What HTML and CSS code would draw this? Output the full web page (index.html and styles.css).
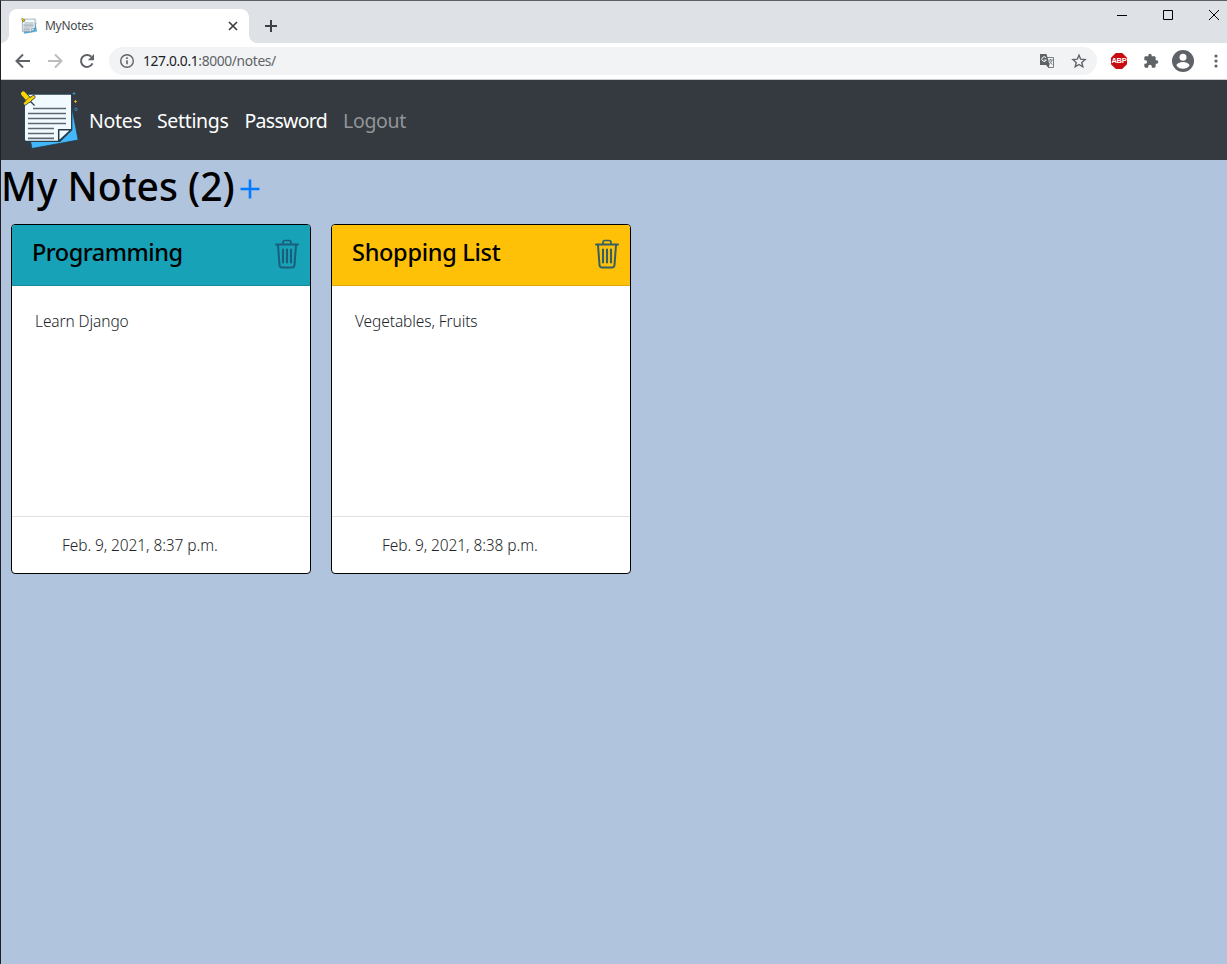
FILE: index.html
```html
<!DOCTYPE html>
<html lang="en">
<head>
<meta charset="utf-8">
<title>MyNotes</title>
<link rel="stylesheet" href="styles.css">
</head>
<body>
<svg class="defs" width="0" height="0">
  <symbol id="note" viewBox="0 0 60 60">
    <path d="M52.500 15.500l6.700 34.500-46.200 8.500-1.500-7z" fill="#42b8fb" stroke="#263e4c" stroke-width=".8"/>
    <path d="M7 4h45.700v35.700L41 51.300H7q-1.700 0-1.700-1.700V5.700Q5.300 4 7 4z" fill="#f0faff" stroke="#263e4c" stroke-width="1.300" stroke-linejoin="round"/>
    <path d="M39.700 51.300V39.700h12.500z" fill="#f0faff" stroke="#263e4c" stroke-width="1.500" stroke-linejoin="round"/>
    <path d="M14 18.500h33M9 23.500h38M9 28.500h38M9 33.500h38M9 38.500h26M9 43.500h26M9 48.300h26" stroke="#5e6870" stroke-width="1.700"/>
    <path d="M10.500 10.500l5 5" stroke="#263e4c" stroke-width="1.300"/>
    <path d="M4.300 3.700l5.500 6" stroke="#263e4c" stroke-width="6" stroke-linecap="round"/>
    <path d="M6 13.500l8.500-6.500" stroke="#263e4c" stroke-width="4" stroke-linecap="round"/>
    <path d="M4.300 3.700l5.500 6" stroke="#ffd500" stroke-width="4.600" stroke-linecap="round"/>
    <path d="M6 13.500l8.500-6.500" stroke="#ffd500" stroke-width="2.500" stroke-linecap="round"/>
    <path d="M6.500 10.500l5-4" stroke="#5e5a20" stroke-width=".7"/>
    <path d="M53.500 3.500h3M55 2v3" stroke="#348dbf"/>
    <path d="M55 11.500h3M56.500 10v3" stroke="#d7a92c"/>
    <circle cx="57" cy="19.300" r="1.300" fill="none" stroke="#348dbf" stroke-width=".9"/>
  </symbol>
  <symbol id="trash" viewBox="0 0 24 30">
    <g fill="none" stroke="currentColor" stroke-linecap="round" stroke-linejoin="round">
      <path d="M1 5.500h22" stroke-width="2"/>
      <path d="M8 5V3.500Q8 1.500 10 1.500h4q2 0 2 2V5" stroke-width="1.700"/>
      <path d="M3 6l1.500 20q.2 2.500 2.500 2.500h10q2.300 0 2.500-2.500L21 6" stroke-width="2"/>
      <path d="M8 10.500v13M12 10.500v13M16 10.500v13" stroke-width="2.100"/>
    </g>
  </symbol>
</svg>
<div class="window">
  <header class="tabstrip">
    <div class="tab">
      <svg class="favicon"><use href="#note"/></svg>
      <span class="tab-title">MyNotes</span>
      <svg class="tab-close" viewBox="0 0 10 10"><path d="M1 1l8 8M9 1L1 9" stroke="#3c4043" stroke-width="1.700"/></svg>
    </div>
    <svg class="new-tab" viewBox="0 0 12 12"><path d="M6 0v12M0 6h12" stroke="#3c4043" stroke-width="2"/></svg>
    <div class="controls">
      <svg viewBox="0 0 12 12"><path d="M1 6.500h10" stroke="#000"/></svg>
      <svg viewBox="0 0 12 12"><path d="M1.500 1.500h9v9h-9z" fill="none" stroke="#000"/></svg>
      <svg viewBox="0 0 12 12"><path d="M1 1l10 10M11 1L1 11" stroke="#000"/></svg>
    </div>
  </header>
  <div class="toolbar">
    <svg class="tool" viewBox="0 0 16 16"><path d="M15 8H2M8 1.500L1.500 8 8 14.500" fill="none" stroke="#5f6368" stroke-width="2"/></svg>
    <svg class="tool" viewBox="0 0 16 16"><path d="M1 8h13M8 1.500L14.500 8 8 14.500" fill="none" stroke="#bbbdbf" stroke-width="2"/></svg>
    <svg class="tool" viewBox="0 0 16 16"><path d="M13.500 10.400A6 6 0 1 1 12.300 3.700" fill="none" stroke="#5f6368" stroke-width="2"/><path d="M15 1v6.200H8.800z" fill="#5f6368"/></svg>
    <div class="omnibox">
      <svg class="info" viewBox="0 0 16 16"><circle cx="8" cy="8" r="6.300" fill="none" stroke="#5f6368" stroke-width="1.400"/><path d="M8 7.200v4M8 4.300v1.700" stroke="#5f6368" stroke-width="1.600"/></svg>
      <span class="url"><b>127.0.0.1</b>:8000/notes/</span>
      <svg class="translate" viewBox="0 0 16 16"><path d="M7 4.500h7.500v10H9" fill="none" stroke="#7b7f83"/><path d="M1 1h6.500l3.200 11H1z" fill="#5f6368"/><path d="M7 12l2.500 3 1-3z" fill="#5f6368"/><path d="M7 4.700A2.300 2.300 0 1 0 7.300 7H5.200" fill="none" stroke="#fff"/><path d="M9.500 7H14M11.500 6v1M13 7q-.6 2.500-2.700 4M10.500 8q1 2 3 3.500" fill="none" stroke="#777b7f" stroke-width=".9"/></svg>
      <svg class="star" viewBox="0 0 16 16"><path d="M8 2.200l1.700 4 4.400.4-3.300 2.900 1 4.300L8 11.500l-3.800 2.300 1-4.300-3.300-2.900 4.400-.4z" fill="none" stroke="#5f6368" stroke-width="1.400"/></svg>
    </div>
    <div class="extensions">
      <div class="abp">ABP</div>
      <svg class="puzzle" viewBox="0 0 24 24"><path fill="#5f6368" d="M20.500 11H19V7c0-1.100-.9-2-2-2h-4V3.500a2.500 2.500 0 0 0-5 0V5H4c-1.100 0-2 .9-2 2v3.800h1.500a2.700 2.700 0 0 1 0 5.400H2V20c0 1.100.9 2 2 2h3.800v-1.500a2.700 2.700 0 0 1 5.400 0V22H17c1.100 0 2-.9 2-2v-4h1.500a2.500 2.500 0 0 0 0-5z"/></svg>
      <svg class="avatar" viewBox="0 0 22 22"><circle cx="11" cy="11" r="11" fill="#5f6368"/><circle cx="11" cy="7.300" r="3.500" fill="#fff"/><path d="M4.500 15.500c0-2.300 4.300-3.500 6.500-3.500s6.500 1.200 6.500 3.500q-2.300 3.300-6.500 3.300t-6.500-3.300z" fill="#fff"/></svg>
      <svg class="kebab" viewBox="0 0 4 14"><g fill="#5f6368"><circle cx="2" cy="2" r="1.600"/><circle cx="2" cy="7" r="1.600"/><circle cx="2" cy="12" r="1.600"/></g></svg>
    </div>
  </div>
  <nav class="navbar">
    <svg class="logo"><use href="#note"/></svg>
    <a class="nav-link nav-notes">Notes</a>
    <a class="nav-link nav-settings">Settings</a>
    <a class="nav-link nav-password">Password</a>
    <a class="nav-link nav-logout">Logout</a>
  </nav>
  <main class="page">
    <div class="heading">
      <h1>My Notes (2)</h1>
      <svg class="add" viewBox="0 0 20 20"><path d="M10 .5v19M.5 10h19" stroke="#007bff" stroke-width="2.600"/></svg>
    </div>
    <div class="cards">
      <article class="card">
        <div class="card-header teal"><h2 class="title-programming">Programming</h2><svg class="trash"><use href="#trash"/></svg></div>
        <p class="card-body">Learn Django</p>
        <div class="card-footer">Feb. 9, 2021, 8:37 p.m.</div>
      </article>
      <article class="card">
        <div class="card-header amber"><h2>Shopping List</h2><svg class="trash"><use href="#trash"/></svg></div>
        <p class="card-body">Vegetables, Fruits</p>
        <div class="card-footer">Feb. 9, 2021, 8:38 p.m.</div>
      </article>
    </div>
  </main>
</div>
</body>
</html>
```
FILE: styles.css
```css
* { box-sizing: border-box; }
body { margin: 0; font-family: "Noto Sans", "Open Sans", sans-serif; color: #212529; white-space: nowrap; }
h1, h2, p { margin: 0; }
svg { display: block; flex: none; }
.defs { position: absolute; }
.window { width: 1227px; height: 964px; overflow: hidden; border-left: 1px solid #231f20; border-top: 1px solid #5e5f62; background: #b0c4de; display: flex; flex-direction: column; }

.tabstrip { height: 42px; flex: none; background: #dee1e6; display: flex; align-items: flex-start; }
.tab { width: 256px; height: 34px; margin-top: 8px; padding: 0 19px 0 20px; background: radial-gradient(circle at 0 26px, transparent 8px, #fff 8.500px) 0 0 / 8px 34px no-repeat, radial-gradient(circle at 8px 26px, transparent 8px, #fff 8.500px) 100% 0 / 8px 34px no-repeat; background: radial-gradient(circle at 0 0, transparent 7.500px, #fff 8.200px) 0 100% / 8px 8px no-repeat, radial-gradient(circle at 100% 0, transparent 7.500px, #fff 8.200px) 100% 100% / 8px 8px no-repeat, radial-gradient(circle at 100% 100%, #fff 7.500px, transparent 8.200px) 8px 0 / 8px 8px no-repeat, radial-gradient(circle at 0 100%, #fff 7.500px, transparent 8.200px) 240px 0 / 8px 8px no-repeat, linear-gradient(#fff, #fff) 8px 8px / 240px 26px no-repeat, linear-gradient(#fff, #fff) 16px 0 / 224px 8px no-repeat; display: flex; align-items: center; }
.favicon { width: 16px; height: 16px; }
.tab-title { font-size: 12px; line-height: 16px; margin: -1px 0 0 8px; letter-spacing: -.3px; color: #45494d; }
.tab-close { width: 10px; height: 10px; margin-left: auto; }
.new-tab { width: 12px; height: 12px; margin: 19px 0 0 8px; }
.controls { margin: 8px 7px 0 auto; display: flex; gap: 34px; }
.controls svg { width: 12px; height: 12px; }

.toolbar { height: 37px; flex: none; background: #fff; border-bottom: 1px solid #c9ccd0; display: flex; align-items: center; padding-left: 14px; gap: 16px; }
.tool { width: 16px; height: 16px; }
.omnibox { width: 988px; height: 28px; margin-left: -2px; padding: 0 10px; border-radius: 14px; background: #f1f3f4; display: flex; align-items: center; }
.info, .translate, .star { width: 16px; height: 16px; }
.url { margin: -1px 0 0 8px; font-size: 13.800px; letter-spacing: -.35px; color: #5f6368; }
.url b { font-weight: 400; color: #202124; }
.translate { margin-left: auto; }
.star { margin-left: 16px; }
.extensions { display: flex; align-items: center; margin-left: -2px; }
.abp { width: 16px; height: 16px; background: #c70d12; clip-path: polygon(30% 0, 70% 0, 100% 30%, 100% 70%, 70% 100%, 30% 100%, 0 70%, 0 30%); color: #fff; font: bold 7.500px/16px "Liberation Sans", sans-serif; letter-spacing: -.2px; text-align: center; }
.puzzle { width: 16px; height: 16px; margin-left: 16px; }
.avatar { width: 22px; height: 22px; margin-left: 13px; }
.kebab { width: 4px; height: 14px; margin-left: 20px; }

.navbar { height: 80px; flex: none; background: #343a40; display: flex; align-items: center; padding-left: 18px; color: #fff; }
.logo { width: 60px; height: 60px; }
.nav-link { font-size: 19.500px; line-height: 30px; margin-top: 2px; }
.nav-notes { width: 68px; margin-left: 10px; letter-spacing: -.3px; }
.nav-settings { width: 87.500px; letter-spacing: -.35px; }
.nav-password { width: 98.500px; letter-spacing: -.7px; }
.nav-logout { color: #929598; letter-spacing: -.3px; }

.heading { display: flex; height: 54px; align-items: center; }
h1 { width: 239px; font-size: 39px; font-weight: 500; line-height: 52px; margin-top: -2px; color: #000; }
.add { width: 20px; height: 20px; margin-top: 3px; }
.cards { display: flex; gap: 20px; padding: 10px; }
.card { width: 300px; height: 350px; background: #fff; border: 1px solid #000; border-radius: 4px; display: flex; flex-direction: column; overflow: hidden; }
.card-header { height: 61px; padding: 0 11px 0 20px; border-bottom: 1px solid rgba(0,0,0,.13); display: flex; justify-content: space-between; align-items: flex-start; }
.teal { background: #17a2b8; }
.amber { background: #ffc107; }
h2 { font-size: 23.500px; font-weight: 500; line-height: 30px; margin-top: 12px; letter-spacing: -.3px; color: #000; }
.title-programming { letter-spacing: -.48px; }
.trash { width: 24px; height: 30px; margin-top: 14px; color: #1b5e7c; }
.amber .trash { color: #365f62; }
.card-body { flex: 1; padding: 23px; font-size: 15.500px; line-height: 24px; font-weight: 350; letter-spacing: -.1px; }
.card-footer { height: 57px; border-top: 1px solid #dfdfdf; padding: 16px 0 0 50px; font-size: 15.500px; line-height: 24px; font-weight: 350; letter-spacing: -.1px; }
```
